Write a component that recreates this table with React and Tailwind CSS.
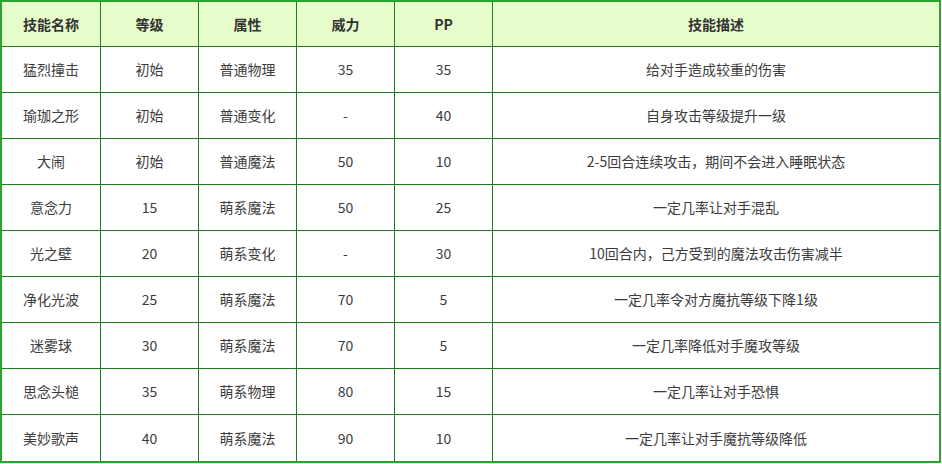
const rows = [
  ["猛烈撞击", "初始", "普通物理", "35", "35", "给对手造成较重的伤害"],
  ["瑜珈之形", "初始", "普通变化", "-", "40", "自身攻击等级提升一级"],
  ["大闹", "初始", "普通魔法", "50", "10", "2-5回合连续攻击，期间不会进入睡眠状态"],
  ["意念力", "15", "萌系魔法", "50", "25", "一定几率让对手混乱"],
  ["光之壁", "20", "萌系变化", "-", "30", "10回合内，己方受到的魔法攻击伤害减半"],
  ["净化光波", "25", "萌系魔法", "70", "5", "一定几率令对方魔抗等级下降1级"],
  ["迷雾球", "30", "萌系魔法", "70", "5", "一定几率降低对手魔攻等级"],
  ["思念头槌", "35", "萌系物理", "80", "15", "一定几率让对手恐惧"],
  ["美妙歌声", "40", "萌系魔法", "90", "10", "一定几率让对手魔抗等级降低"],
];

const headers = ["技能名称", "等级", "属性", "威力", "PP", "技能描述"];

export default function App() {
  return (
    <div className="bg-white w-[942px] h-[464px] font-['Noto_Sans_CJK_SC','Noto_Sans',sans-serif] text-[14px] text-[#3c3c3c]">
      <table className="table-fixed w-[941px] border-separate border-spacing-0 border-2 border-[#2ba52b]">
        <colgroup>
          <col className="w-[99px]" />
          <col className="w-[98px]" />
          <col className="w-[98px]" />
          <col className="w-[98px]" />
          <col className="w-[98px]" />
          <col />
        </colgroup>
        <thead>
          <tr className="h-[45px] bg-[#e6fcca]">
            {headers.map((h, i) => (
              <th
                key={h}
                className={`font-bold text-center text-[#333] border-b border-[#237a23] ${i < 5 ? "border-r" : ""}`}
              >
                {h}
              </th>
            ))}
          </tr>
        </thead>
        <tbody>
          {rows.map((r, ri) => (
            <tr key={ri} className="h-[46px]">
              {r.map((c, ci) => (
                <td
                  key={ci}
                  className={`text-center border-[#237a23] ${ci < 5 ? "border-r" : ""} ${ri < rows.length - 1 ? "border-b" : ""}`}
                >
                  {c}
                </td>
              ))}
            </tr>
          ))}
        </tbody>
      </table>
    </div>
  );
}
